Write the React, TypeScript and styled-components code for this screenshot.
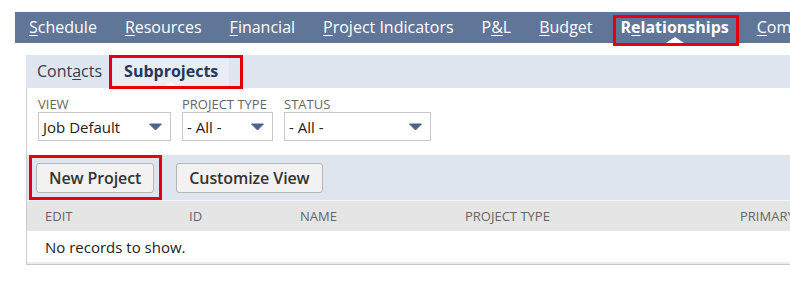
import React from "react";
import styled, { createGlobalStyle } from "styled-components";

const GlobalStyle = createGlobalStyle`
  html, body {
    margin: 0;
    padding: 0;
    background: #ffffff;
    overflow: hidden;
  }
  body {
    font-family: "Open Sans", "Liberation Sans", sans-serif;
    color: #222;
  }
`;

const Page = styled.div`
  width: 790px;
  padding: 12px 0 0 15px;
  box-sizing: border-box;
`;

const NavBar = styled.nav`
  display: flex;
  height: 31px;
  background-color: #607698;
  white-space: nowrap;
`;

const NavItem = styled.div<{ $active?: boolean }>`
  position: relative;
  padding: 0 14px;
  line-height: 31px;
  font-size: 16px;
  color: #ffffff;
  font-weight: ${(p) => (p.$active ? 700 : 400)};

  u {
    text-decoration-thickness: 1px;
    text-underline-offset: 2px;
  }

  ${(p) =>
    p.$active &&
    `
    &::before {
      content: "";
      position: absolute;
      left: 50%;
      bottom: 0;
      margin-left: -9px;
      border-left: 9px solid transparent;
      border-right: 9px solid transparent;
      border-bottom: 6px solid #ffffff;
    }
    &::after {
      content: "";
      position: absolute;
      top: 3px;
      bottom: -3px;
      left: 6px;
      right: 4px;
      border: 3px solid #e6000e;
      z-index: 2;
    }
  `}
`;

const Workspace = styled.div`
  margin: 12px 0 0 11px;
`;

const SubTabs = styled.div`
  display: flex;
  height: 33px;
  background-color: #e0e6ef;
`;

const SubTab = styled.div<{ $active?: boolean }>`
  position: relative;
  padding: 0 11px;
  line-height: 33px;
  font-size: 16px;
  color: ${(p) => (p.$active ? "#24385b" : "#333c4a")};
  font-weight: ${(p) => (p.$active ? 700 : 400)};
  background-color: ${(p) => (p.$active ? "#e8ecf3" : "transparent")};

  u {
    text-decoration-thickness: 1px;
    text-underline-offset: 2px;
  }

  ${(p) =>
    p.$active &&
    `
    &::before {
      content: "";
      position: absolute;
      left: 50%;
      bottom: 0;
      margin-left: -9px;
      border-left: 9px solid transparent;
      border-right: 9px solid transparent;
      border-bottom: 6px solid #f6f8fb;
    }
    &::after {
      content: "";
      position: absolute;
      top: 0;
      bottom: -1px;
      left: -4px;
      right: -14px;
      border: 3px solid #e6000e;
      z-index: 2;
    }
  `}
`;

const Panel = styled.div`
  border-left: 1px solid #cccccc;
  border-bottom: 1px solid #c8c8c8;
`;

const FilterRow = styled.div`
  display: flex;
  gap: 11px;
  padding: 9px 0 14px 11px;
`;

const Field = styled.div<{ $width: number }>`
  display: flex;
  flex-direction: column;
  width: ${(p) => p.$width}px;
`;

const FieldLabel = styled.label`
  font-size: 13px;
  line-height: 15px;
  color: #666666;
  text-transform: uppercase;
  white-space: nowrap;
`;

const Select = styled.div`
  display: flex;
  align-items: center;
  justify-content: space-between;
  height: 29px;
  box-sizing: border-box;
  border: 1px solid #c9c9c9;
  background: #ffffff;
  padding: 0 8px 0 4px;
  font-size: 15px;
  color: #222222;
`;

const Caret = () => (
  <svg width="13" height="8" viewBox="0 0 13 8">
    <path d="M0.5 1 L12.5 1 L6.5 7 Z" fill="#4d6489" stroke="#4d6489" strokeLinejoin="round" />
  </svg>
);

const ButtonBar = styled.div`
  display: flex;
  align-items: flex-start;
  gap: 22px;
  height: 46px;
  padding: 8px 0 0 9px;
  box-sizing: border-box;
  background-color: #dfe5ee;
  border-bottom: 1px solid #f3f5f9;
`;

const Button = styled.button<{ $marked?: boolean }>`
  position: relative;
  height: 30px;
  padding: 0 12px;
  font-family: "Open Sans", "Liberation Sans", sans-serif;
  font-size: 16px;
  font-weight: 600;
  letter-spacing: -0.1px;
  color: #333333;
  background: #f2f2f2;
  border: 1px solid #b5b5b5;
  border-radius: 3px;
  white-space: nowrap;

  ${(p) =>
    p.$marked &&
    `
    &::after {
      content: "";
      position: absolute;
      top: -9px;
      bottom: -8px;
      left: -8px;
      right: -9px;
      border: 3px solid #e6000e;
    }
  `}
`;

const TableHeader = styled.div`
  display: grid;
  grid-template-columns: 144px 111px 165px 275px auto;
  height: 30px;
  align-items: center;
  padding-left: 18px;
  background-color: #e5e5e5;
  font-size: 13px;
  color: #666666;
  white-space: nowrap;
`;

const EmptyRow = styled.div`
  padding: 6px 0 5px 18px;
  line-height: 20px;
  font-size: 15px;
  color: #222222;
  border-bottom: 2px solid #ececec;
`;

const navItems = [
  { pre: "", key: "S", post: "chedule" },
  { pre: "", key: "R", post: "esources" },
  { pre: "", key: "F", post: "inancial" },
  { pre: "", key: "P", post: "roject Indicators" },
  { pre: "P", key: "&", post: "L" },
  { pre: "", key: "B", post: "udget" },
  { pre: "R", key: "e", post: "lationships", active: true },
  { pre: "", key: "C", post: "ommunication" },
];

const filters = [
  { label: "View", value: "Job Default", width: 133 },
  { label: "Project Type", value: "- All -", width: 91 },
  { label: "Status", value: "- All -", width: 147 },
];

const columns = ["Edit", "ID", "Name", "Project Type", "Primary Contact"];

export default function App() {
  return (
    <Page>
      <GlobalStyle />
      <NavBar>
        {navItems.map((item, i) => (
          <NavItem key={i} $active={item.active}>
            {item.pre}
            <u>{item.key}</u>
            {item.post}
          </NavItem>
        ))}
      </NavBar>
      <Workspace>
        <SubTabs>
          <SubTab>
            Cont<u>a</u>cts
          </SubTab>
          <SubTab $active>Subprojects</SubTab>
        </SubTabs>
        <Panel>
          <FilterRow>
            {filters.map((f) => (
              <Field key={f.label} $width={f.width}>
                <FieldLabel>{f.label}</FieldLabel>
                <Select>
                  <span>{f.value}</span>
                  <Caret />
                </Select>
              </Field>
            ))}
          </FilterRow>
          <ButtonBar>
            <Button $marked>New Project</Button>
            <Button>Customize View</Button>
          </ButtonBar>
          <TableHeader>
            {columns.map((c) => (
              <span key={c}>{c.toUpperCase()}</span>
            ))}
          </TableHeader>
          <EmptyRow>No records to show.</EmptyRow>
        </Panel>
      </Workspace>
    </Page>
  );
}
